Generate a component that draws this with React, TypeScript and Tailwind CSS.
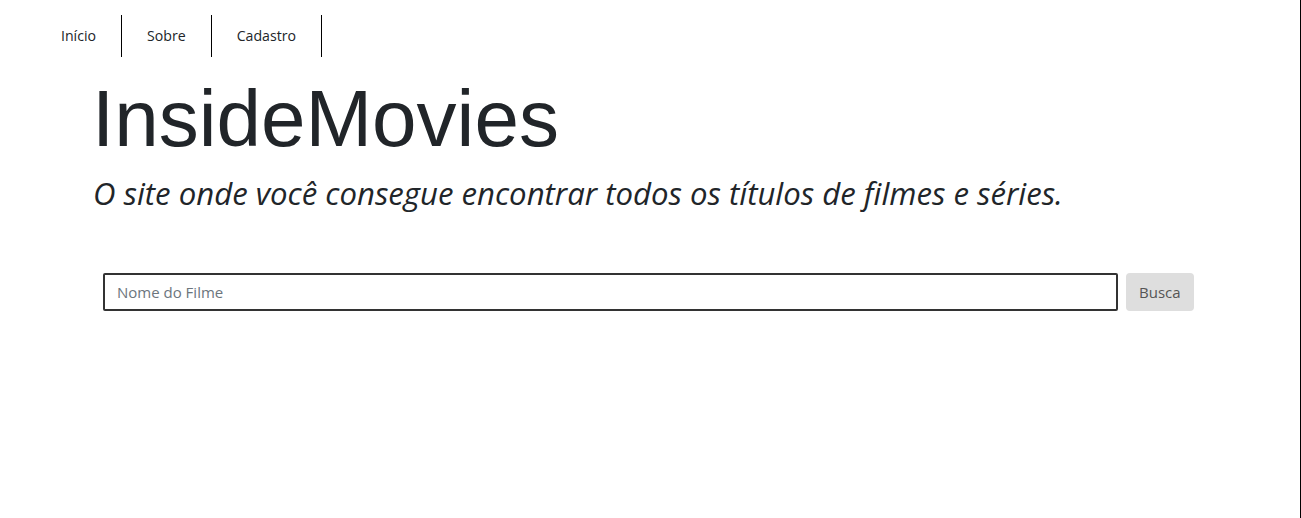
import React from "react";

export default function App() {
  return (
    <div className="min-h-[518px] bg-white border-r border-black text-[#212529]" style={{ fontFamily: '"Open Sans", "Noto Sans", sans-serif' }}>
      <nav className="flex pt-[15px] pl-[36px]">
        {["Início", "Sobre", "Cadastro"].map((t) => (
          <a key={t} className="h-[42px] flex items-center px-[25px] border-r border-black text-[14.15px] text-[#212529] font-['Open_Sans',sans-serif]">
            {t}
          </a>
        ))}
      </nav>
      <header className="pl-[92px] pt-[14px]">
        <h1 className="text-[80px] leading-[96px] font-['Liberation_Sans',Arial,sans-serif] font-normal">InsideMovies</h1>
        <p className="italic text-[31.15px] leading-[40px] font-['Open_Sans',sans-serif] mt-[6px] ml-[1px]">
          O site onde você consegue encontrar todos os títulos de filmes e séries.
        </p>
      </header>
      <div className="flex items-center gap-[8px] pl-[103px] pt-[60px]">
        <input
          placeholder="Nome do Filme"
          className="w-[1015px] h-[38px] border-2 border-[#333] rounded-[2px] px-[12px] text-[15px] placeholder:text-[#6c757d] outline-none font-['Open_Sans',sans-serif]"
        />
        <button className="h-[38px] px-[13px] rounded-[4px] bg-[#dedede] text-[#555] text-[15px] font-['Open_Sans',sans-serif]">
          Busca
        </button>
      </div>
    </div>
  );
}
